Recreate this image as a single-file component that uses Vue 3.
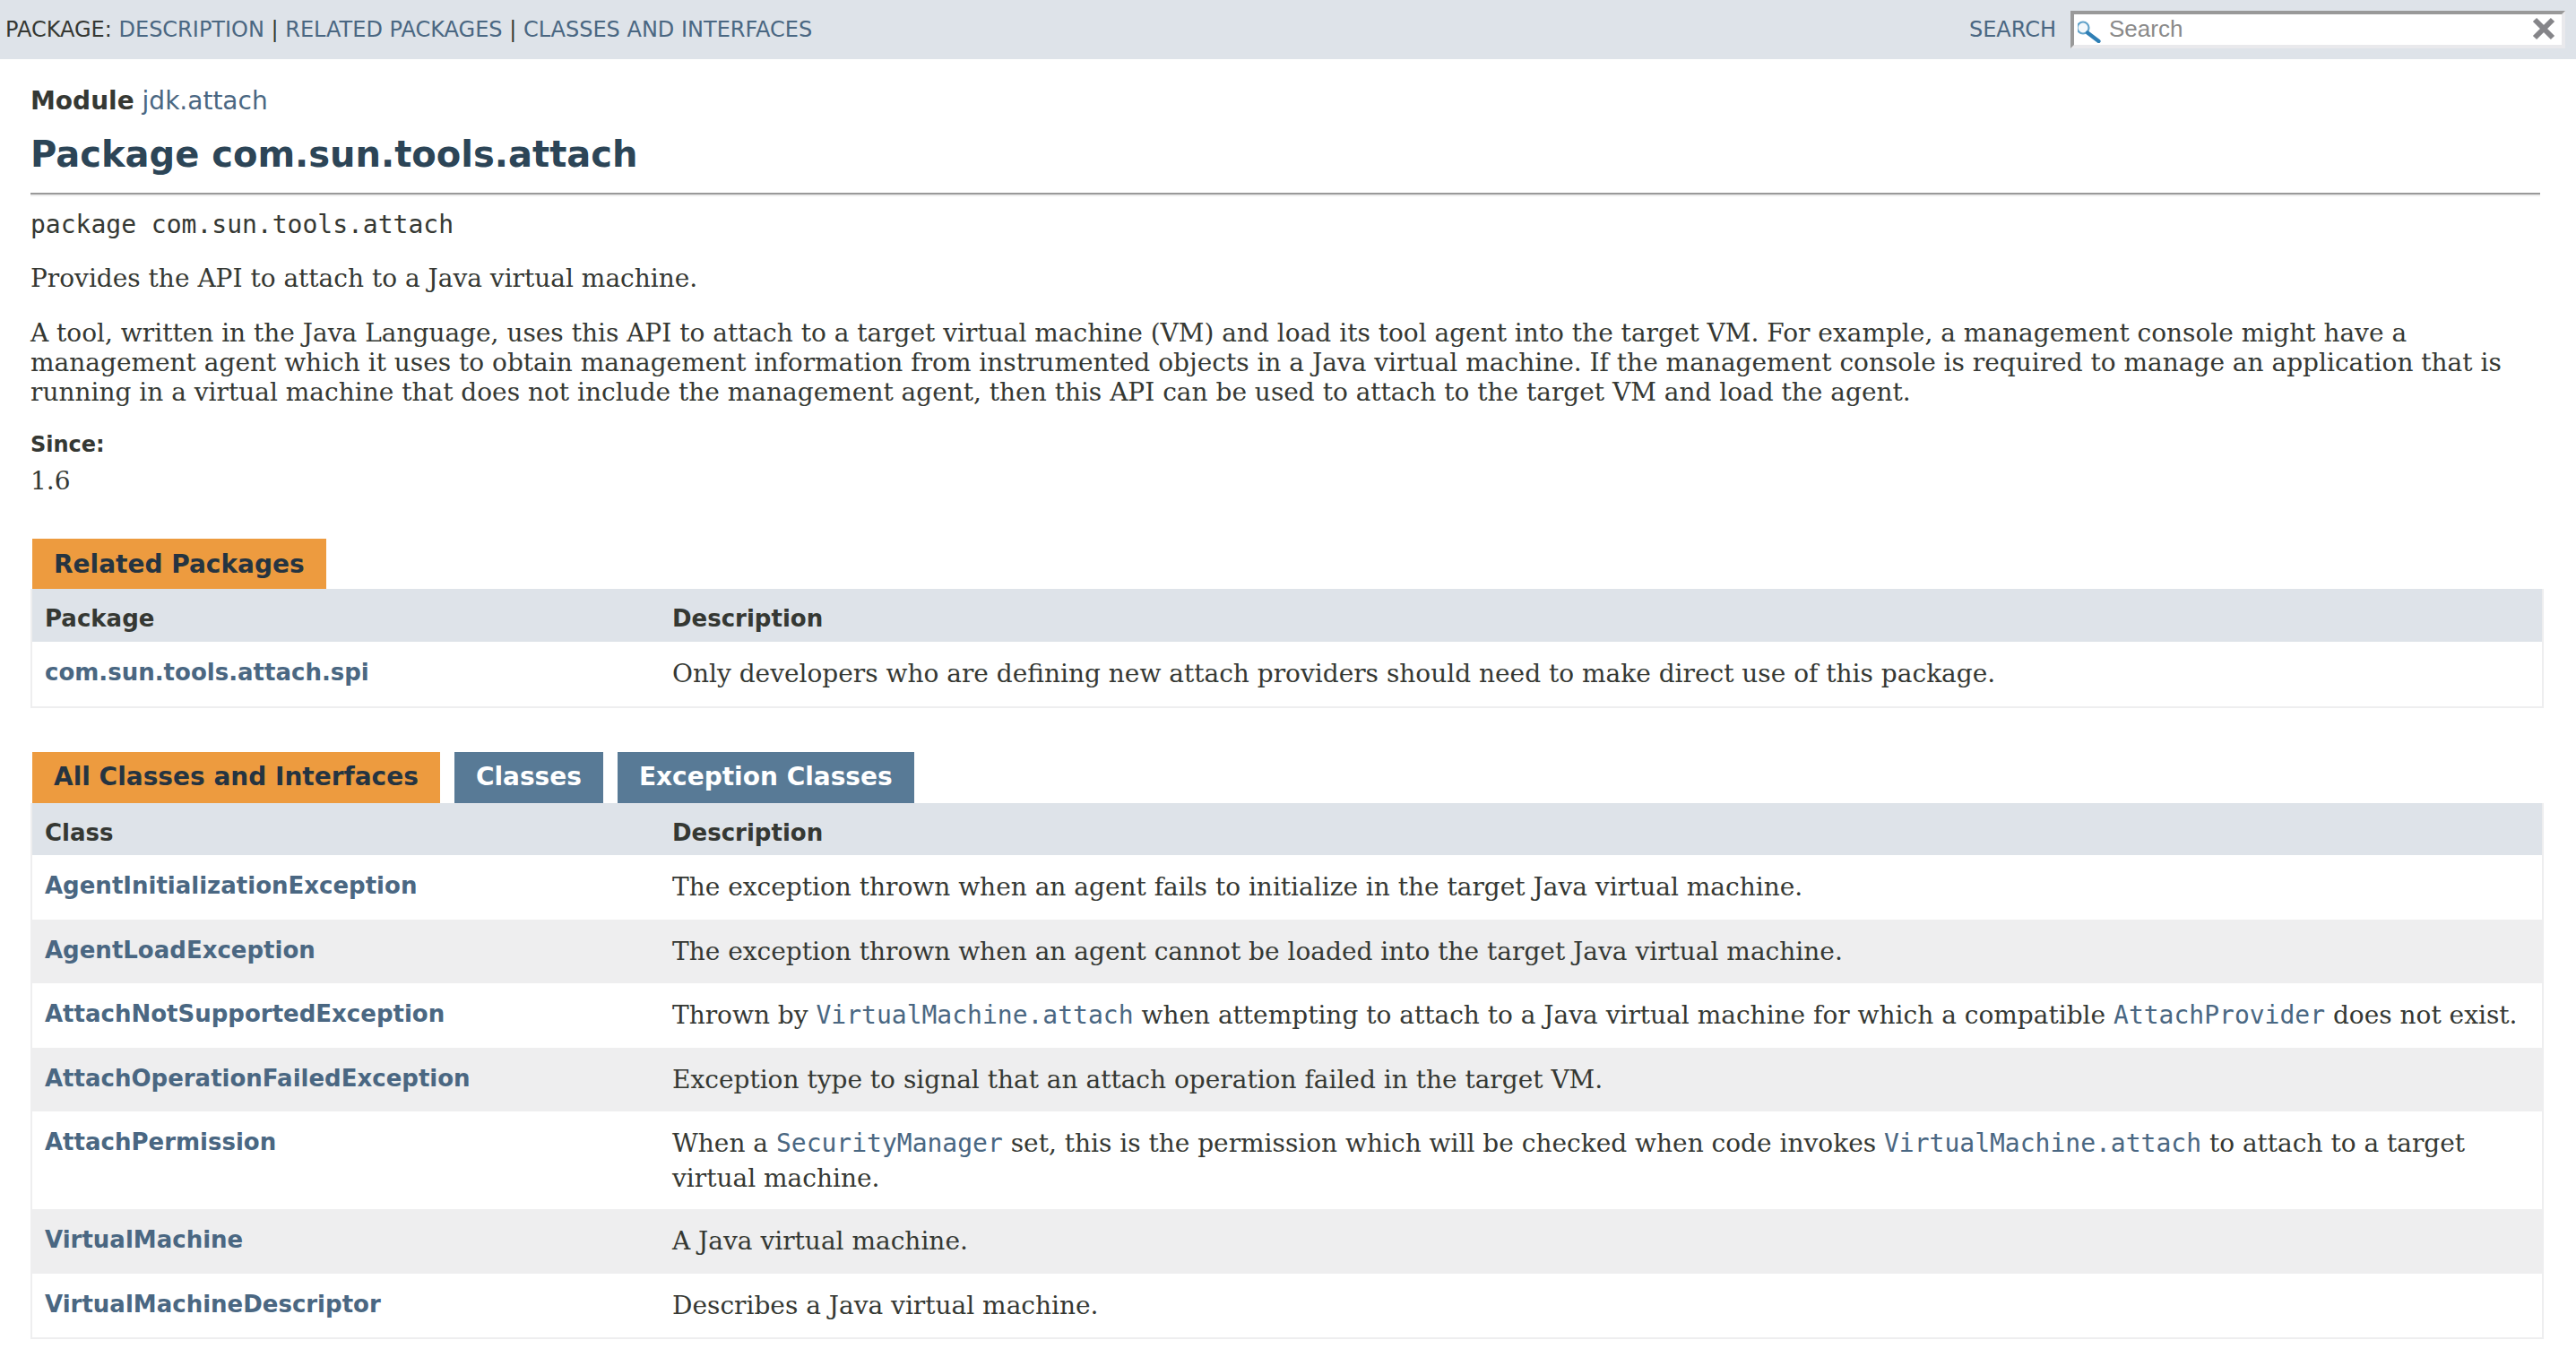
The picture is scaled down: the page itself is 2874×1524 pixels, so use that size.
<script setup>
const classes = [
  { name: 'AgentInitializationException', desc: ['The exception thrown when an agent fails to initialize in the target Java virtual machine.'] },
  { name: 'AgentLoadException', desc: ['The exception thrown when an agent cannot be loaded into the target Java virtual machine.'] },
  { name: 'AttachNotSupportedException', desc: ['Thrown by ', { code: 'VirtualMachine.attach' }, ' when attempting to attach to a Java virtual machine for which a compatible ', { code: 'AttachProvider' }, ' does not exist.'] },
  { name: 'AttachOperationFailedException', desc: ['Exception type to signal that an attach operation failed in the target VM.'] },
  { name: 'AttachPermission', desc: ['When a ', { code: 'SecurityManager' }, ' set, this is the permission which will be checked when code invokes ', { code: 'VirtualMachine.attach' }, ' to attach to a target virtual machine.'] },
  { name: 'VirtualMachine', desc: ['A Java virtual machine.'] },
  { name: 'VirtualMachineDescriptor', desc: ['Describes a Java virtual machine.'] },
]
</script>

<template>
  <div class="page">
    <div class="subnav">
      <div class="crumbs">
        PACKAGE: <a>DESCRIPTION</a> | <a>RELATED PACKAGES</a> | <a>CLASSES AND INTERFACES</a>
      </div>
      <div class="search">
        <label>SEARCH</label>
        <div class="search-box">
          <svg class="lens" width="28" height="32" viewBox="0 0 28 32">
            <circle cx="6" cy="15" r="6.5" fill="#f2f8fc" stroke="#62a3ca" stroke-width="2.2" />
            <path d="M11 20.5 L23.5 30" stroke="#2f7fb5" stroke-width="4.2" stroke-linecap="round" />
          </svg>
          <span class="placeholder">Search</span>
          <svg class="clear" width="26" height="26" viewBox="0 0 26 26">
            <path d="M3 3 L23 23 M23 3 L3 23" stroke="#858589" stroke-width="6" />
          </svg>
        </div>
      </div>
    </div>

    <main class="content">
      <div class="module"><b>Module</b> <a>jdk.attach</a></div>
      <h1>Package com.sun.tools.attach</h1>
      <hr />
      <div class="sig">package com.sun.tools.attach</div>
      <p class="first">Provides the API to attach to a Java virtual machine.</p>
      <p class="para">A tool, written in the Java Language, uses this API to attach to a target virtual machine (VM) and load its tool agent into the target VM. For example, a management console might have a management agent which it uses to obtain management information from instrumented objects in a Java virtual machine. If the management console is required to manage an application that is running in a virtual machine that does not include the management agent, then this API can be used to attach to the target VM and load the agent.</p>
      <div class="since">Since:</div>
      <div class="since-val">1.6</div>

      <section class="related">
        <div class="tabs"><span class="tab active">Related Packages</span></div>
        <div class="table">
          <div class="head">Package</div>
          <div class="head">Description</div>
          <div class="cell name"><a>com.sun.tools.attach.spi</a></div>
          <div class="cell desc">Only developers who are defining new attach providers should need to make direct use of this package.</div>
        </div>
      </section>

      <section class="classes">
        <div class="tabs">
          <span class="tab active">All Classes and Interfaces</span>
          <span class="tab">Classes</span>
          <span class="tab">Exception Classes</span>
        </div>
        <div class="table">
          <div class="head">Class</div>
          <div class="head">Description</div>
          <template v-for="(c, i) in classes" :key="c.name">
            <div class="cell name" :class="{ even: i % 2 }"><a>{{ c.name }}</a></div>
            <div class="cell desc" :class="{ even: i % 2 }">
              <template v-for="(part, j) in c.desc" :key="j">
                <code v-if="part.code">{{ part.code }}</code>
                <template v-else>{{ part }}</template>
              </template>
            </div>
          </template>
        </div>
      </section>
    </main>
  </div>
</template>

<style scoped>
.page {
  font-family: "DejaVu Sans", sans-serif;
  font-size: 24px;
  color: #353833;
  background: #fff;
  min-height: 1524px;
}

a {
  color: #4a6782;
}

.subnav {
  height: 66px;
  background: #dee3e9;
  display: flex;
  justify-content: space-between;
  align-items: center;
  padding: 0 12px 0 6px;
  box-sizing: border-box;
}

.crumbs {
  font-size: 24px;
}

.search {
  display: flex;
  align-items: center;
  gap: 16px;
}

.search label {
  color: #4a6782;
  font-size: 24px;
}

.search-box {
  width: 552px;
  height: 42px;
  box-sizing: border-box;
  background: #fff;
  border-style: solid;
  border-width: 4px;
  border-color: #999 #e9e9ec #e9e9ec #999;
  display: flex;
  align-items: center;
  padding: 0 7px 2px 4px;
}

.lens {
  flex: none;
}

.placeholder {
  font-family: "Liberation Sans", sans-serif;
  font-size: 26px;
  color: #8a8a8a;
  margin-left: 7px;
  flex: 1;
}

.clear {
  flex: none;
}

.content {
  padding: 29px 36px 0 34px;
}

.module {
  font-size: 28px;
  line-height: 36px;
}

h1 {
  margin: 16px 0 0;
  font-size: 40px;
  line-height: 50px;
  font-weight: bold;
  color: #2c4557;
}

hr {
  margin: 18px 4px 0 0;
  border-style: solid;
  border-width: 2px 0;
  border-color: #999 transparent #eee;
  height: 0;
}

.sig {
  font-family: "DejaVu Sans Mono", monospace;
  font-size: 28px;
  line-height: 34px;
  margin-top: 15px;
}

p {
  margin: 0;
  font-family: "DejaVu Serif", serif;
  font-size: 28px;
  line-height: 33px;
}

.first {
  margin-top: 26px;
}

.para {
  margin-top: 28px;
}

.since {
  margin-top: 27px;
  font-size: 24px;
  font-weight: bold;
  line-height: 30px;
}

.since-val {
  margin-top: 9px;
  font-family: "DejaVu Serif", serif;
  font-size: 28px;
  line-height: 33px;
}

.related {
  margin-top: 48px;
}

.classes {
  margin-top: 49.5px;
}

.tabs {
  display: flex;
  gap: 16px;
  padding-left: 2px;
}

.tab {
  height: 56px;
  line-height: 58px;
  padding: 0 24px;
  font-size: 28px;
  font-weight: bold;
  color: #fff;
  background: #587a96;
}

.classes .tab {
  height: 57px;
  line-height: 55px;
}

.tab.active {
  color: #253441;
  background: #ed9b3f;
}

.table {
  display: grid;
  grid-template-columns: 25% 75%;
  border-left: 2px solid #eeeeef;
  border-right: 2px solid #eeeeef;
  border-bottom: 2px solid #eeeeef;
  box-sizing: border-box;
}

.head {
  background: #dee3e9;
  height: 59px;
  box-sizing: border-box;
  padding: 18px 0 0 14px;
  line-height: 30px;
  font-weight: bold;
  font-size: 26px;
  white-space: nowrap;
}

.classes .head {
  height: 58px;
}

.cell {
  padding: 16px 14px 15px;
  box-sizing: border-box;
  min-height: 71.5px;
  background: #fff;
}

.cell.even {
  background: #eeeeef;
}

.name {
  padding-top: 19px;
  font-weight: bold;
  font-size: 26px;
  line-height: 30px;
}

.desc {
  font-family: "DejaVu Serif", serif;
  font-size: 28px;
  line-height: 39px;
}

code {
  font-family: "DejaVu Sans Mono", monospace;
  color: #4a6782;
}
</style>
